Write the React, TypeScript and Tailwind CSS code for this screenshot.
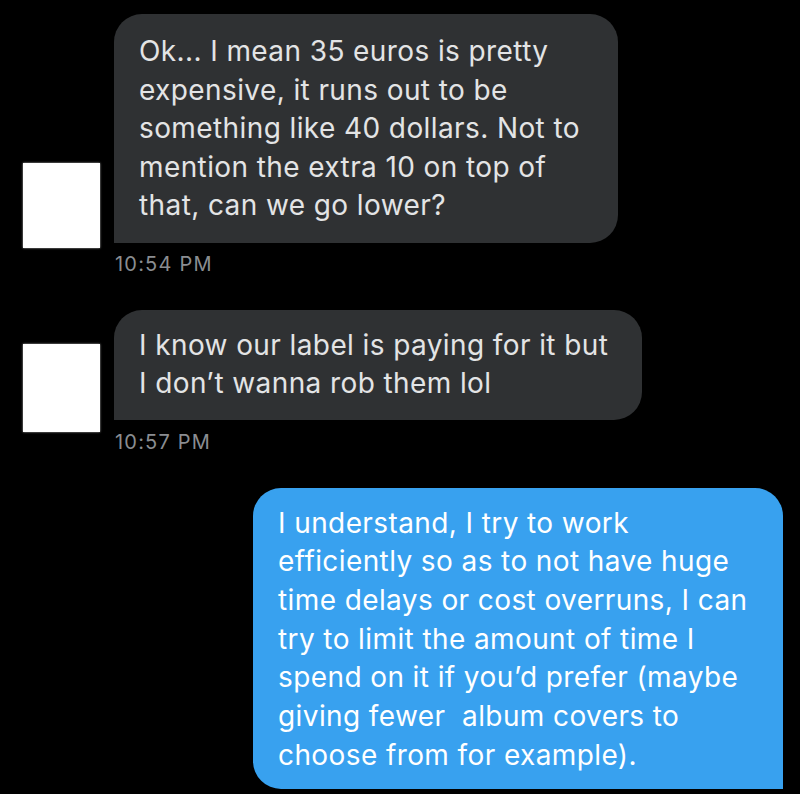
const font = { fontFamily: "Inter, 'Liberation Sans', sans-serif" };

type Msg = {
  lines: string[];
  time: string;
  bubble: string;
  avatar: string;
  timeGap: string;
};

const incoming: Msg[] = [
  {
    lines: [
      "Ok... I mean 35 euros is pretty",
      "expensive, it runs out to be",
      "something like 40 dollars. Not to",
      "mention the extra 10 on top of",
      "that, can we go lower?",
    ],
    time: "10:54 PM",
    bubble: "w-[504px] py-[18px] leading-[38.5px]",
    avatar: "mt-[149px] h-[85px]",
    timeGap: "mt-[11px]",
  },
  {
    lines: ["I know our label is paying for it but", "I don\u2019t wanna rob them lol"],
    time: "10:57 PM",
    bubble: "w-[528px] pt-[16px] pb-[17px] leading-[38.5px]",
    avatar: "mt-[34px] h-[88px]",
    timeGap: "mt-[12px]",
  },
];

const outgoing = [
  "I understand, I try to work",
  "efficiently so as to not have huge",
  "time delays or cost overruns, I can",
  "try to limit the amount of time I",
  "spend on it if you\u2019d prefer (maybe",
  "giving fewer \u00a0album covers to",
  "choose from for example).",
];

function Incoming({ msg }: { msg: Msg }) {
  return (
    <div className="flex items-start pl-[23px]">
      {/* censored avatar */}
      <div
        className={`${msg.avatar} w-[77px] bg-white shadow-[0_0_2px_rgba(255,255,255,0.7)]`}
      />
      <div className="ml-[14px] flex flex-col">
        <div
          className={`${msg.bubble} rounded-[28px] rounded-bl-none bg-[#2f3133] px-[25px] text-[28px] tracking-[0.4px] text-[#e3e4e5]`}
        >
          {msg.lines.map((l) => (
            <div key={l} className="whitespace-pre">
              {l}
            </div>
          ))}
        </div>
        <div
          className={`${msg.timeGap} pl-px text-[20px] leading-[20px] tracking-[1.2px] text-[#8a8d91]`}
        >
          {msg.time}
        </div>
      </div>
    </div>
  );
}

export default function App() {
  return (
    <div className="h-[794px] w-[800px] overflow-hidden bg-black pt-[14px]" style={font}>
      <Incoming msg={incoming[0]} />
      <div className="mt-[36px]">
        <Incoming msg={incoming[1]} />
      </div>
      <div className="mt-[36px] flex justify-end pr-[17px]">
        <div className="w-[530px] rounded-[28px] rounded-br-none bg-[#38a1ef] px-[25px] pt-[16px] pb-[15px] text-[28px] leading-[38.7px] tracking-[0.4px] text-white">
          {outgoing.map((l) => (
            <div key={l} className="whitespace-pre">
              {l}
            </div>
          ))}
        </div>
      </div>
    </div>
  );
}
